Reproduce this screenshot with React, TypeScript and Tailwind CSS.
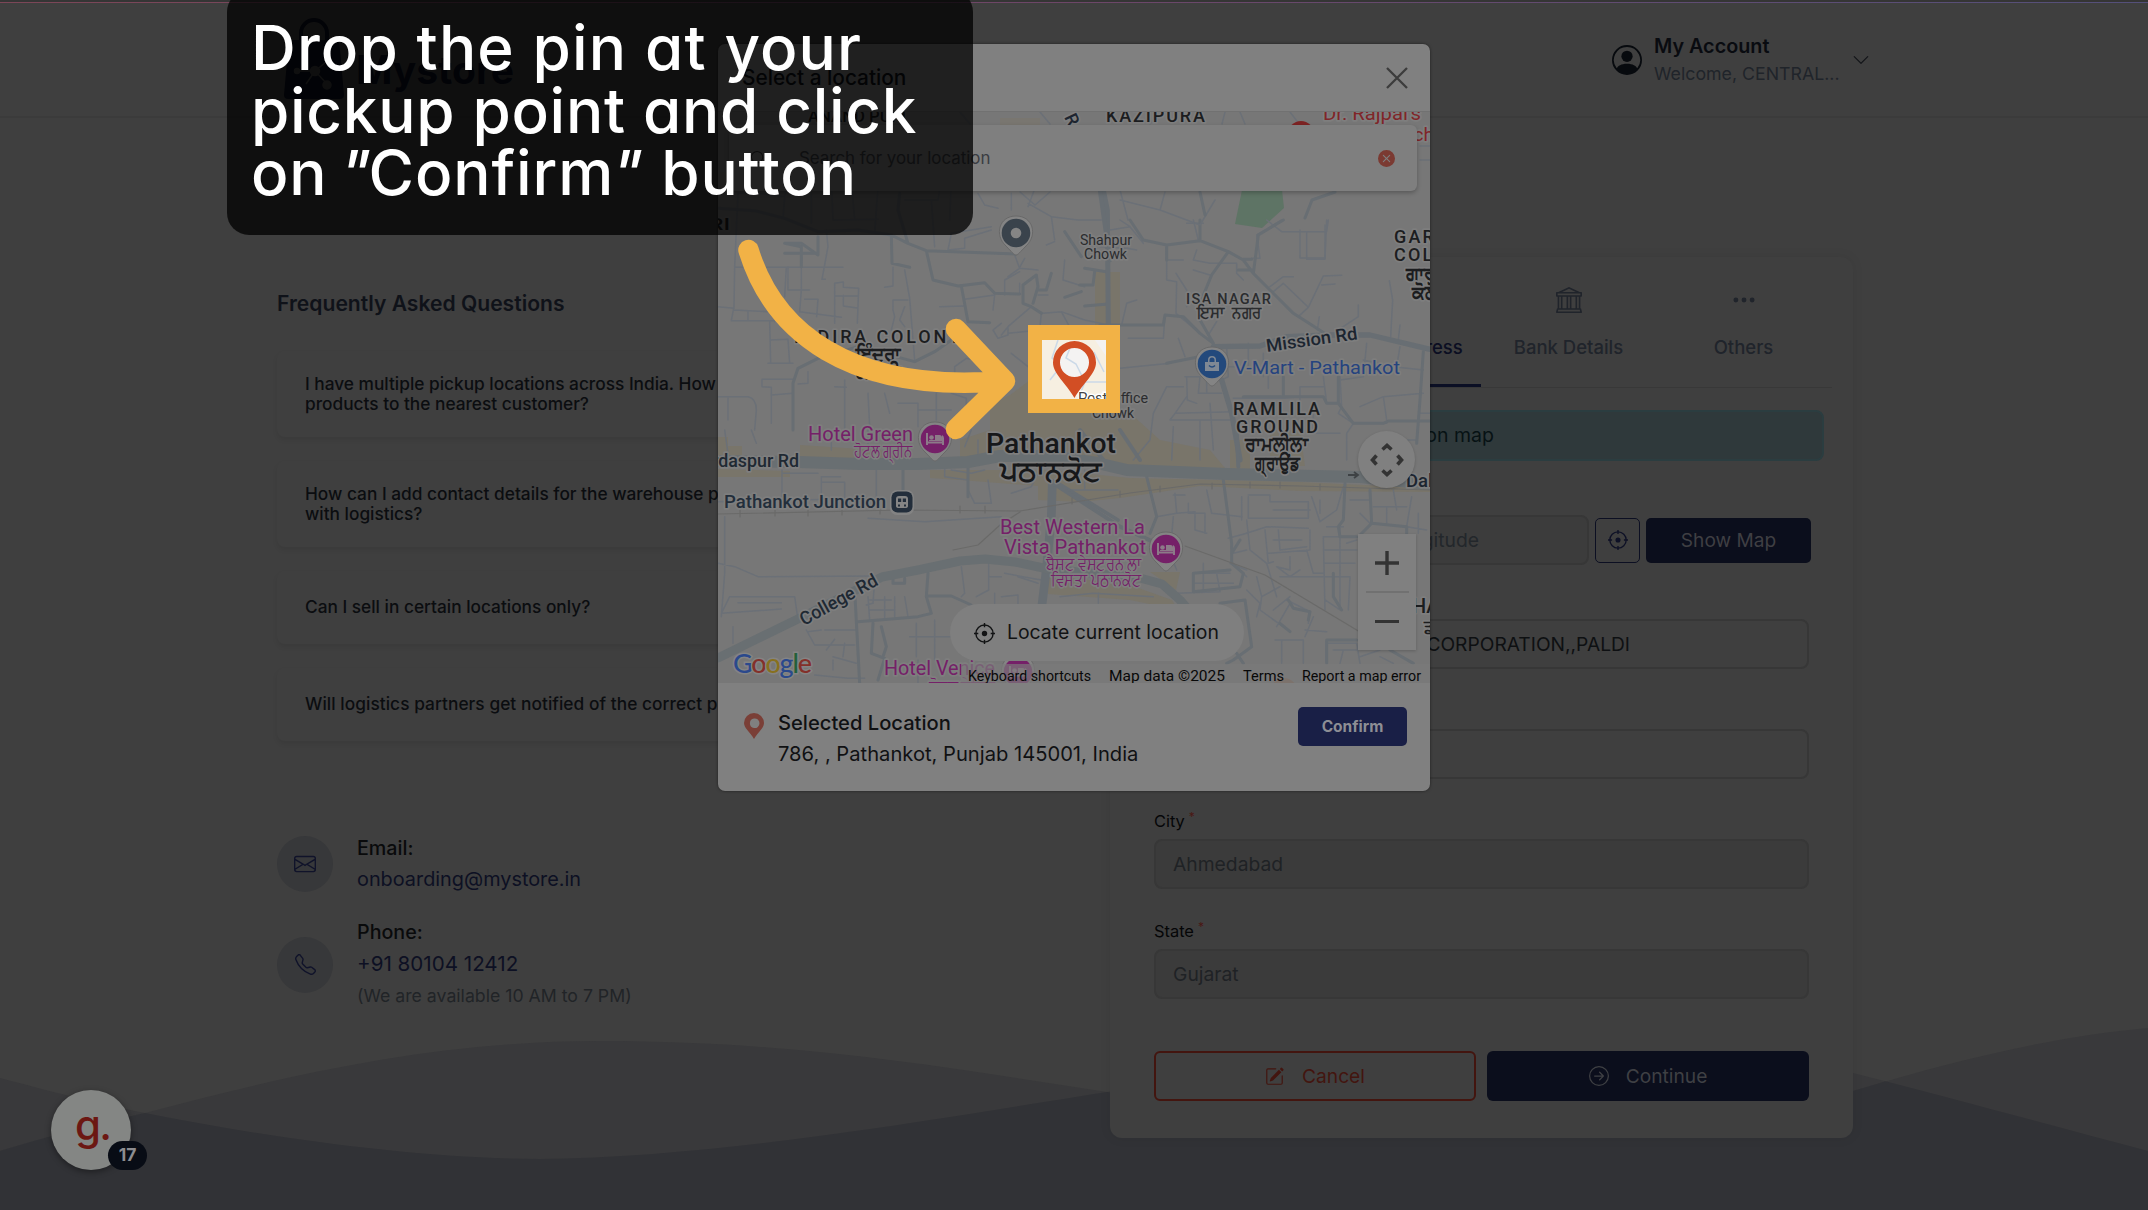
import type { ReactNode } from "react";
import {
  BsArrowRightCircle,
  BsBank,
  BsChevronDown,
  BsEnvelope,
  BsPencilSquare,
  BsPersonCircle,
  BsSearch,
  BsTelephone,
  BsThreeDots,
  BsXCircleFill,
} from "react-icons/bs";

function LocateIcon({ className }: { className: string }) {
  return (
    <svg viewBox="0 0 22 22" className={className} fill="none" stroke="currentColor" strokeWidth="1.5">
      <circle cx="11" cy="11" r="9" />
      <circle cx="11" cy="11" r="2.8" fill="currentColor" stroke="none" />
      <path d="M11 0v4.5M11 17.5V22M0 11h4.5M17.5 11H22" />
    </svg>
  );
}

function Logo() {
  return (
    <svg viewBox="0 0 60 84" className="h-[84px] w-[60px]">
      <path d="M17 30V17a13 13 0 0 1 26 0v13" fill="none" stroke="#0a0d1c" strokeWidth="4" />
      <path d="M8 24H52Q55 24 55.500 28L60 79Q60 83 56 83H4Q0 83 0 79L4.500 28Q5 24 8 24Z" fill="#0a0d1c" />
      <g stroke="#3f3f3f" strokeWidth="1.500" fill="#3f3f3f">
        <path d="M13 55H31L43 68M31 55L42 46M31 55L22 68" fill="none" />
        <circle cx="31" cy="55" r="4.500" />
        <circle cx="43" cy="69" r="4" />
        <circle cx="13" cy="55" r="2.500" />
      </g>
    </svg>
  );
}

function Header() {
  return (
    <header className="flex h-[118px] shrink-0 items-center justify-between border-b-2 border-[#3b3b3b] pr-[278px] pl-[284px]">
      <div className="flex items-center gap-3 text-[#0a0d1c]">
        <Logo />
        <span className="pt-[22px] text-[39px] leading-none font-bold">Mystore</span>
      </div>
      <div className="flex items-center pt-[3px]">
        <BsPersonCircle className="size-[30px] text-[#070a0e]" />
        <div className="ml-3 w-[186px] whitespace-nowrap">
          <div className="text-[19.8px] leading-[27px] font-semibold text-[#090b10]">My Account</div>
          <div className="text-[17.75px] leading-[27px] text-[#20242a]">Welcome, CENTRAL...</div>
        </div>
        <BsChevronDown className="ml-[12px] size-[18px] text-[#121418]" />
      </div>
    </header>
  );
}

function FaqCard({ children, tall }: { children: ReactNode; tall?: boolean }) {
  return (
    <div
      className={
        "flex w-[700px] items-center overflow-hidden rounded-lg pl-[28px] text-[17.3px] leading-[20.5px] font-medium whitespace-nowrap text-[#0b0d10] shadow-[0_3px_5px_rgba(0,0,0,0.08)] " +
        (tall ? "h-[86px]" : "h-[73px]")
      }
    >
      <p>{children}</p>
    </div>
  );
}

function LeftColumn() {
  return (
    <section className="w-[760px] pt-[170px]">
      <h2 className="text-[21.1px] leading-[32px] font-semibold text-[#0f1219]">Frequently Asked Questions</h2>
      <div className="mt-[31px] flex flex-col gap-6">
        <FaqCard tall>
          I have multiple pickup locations across India. How can I map the
          <br />
          products to the nearest customer?
        </FaqCard>
        <FaqCard tall>
          How can I add contact details for the warehouse person to share
          <br />
          with logistics?
        </FaqCard>
        <FaqCard>Can I sell in certain locations only?</FaqCard>
        <FaqCard>
          <span className="tracking-[0.06px]">Will logistics partners get notified of the correct pickup location?</span>
        </FaqCard>
      </div>
      <div className="mt-[92px] flex items-center gap-6">
        <div className="flex size-[56px] items-center justify-center rounded-full bg-[#37383a]">
          <BsEnvelope className="size-[22px] text-[#10132a]" />
        </div>
        <div className="leading-[31px]">
          <div className="text-[19.7px] font-medium text-[#090a0b]">Email:</div>
          <div className="text-[19.85px] text-[#0d1023]">onboarding@mystore.in</div>
        </div>
      </div>
      <div className="mt-[22px] flex items-center gap-6">
        <div className="flex size-[56px] items-center justify-center rounded-full bg-[#37383a]">
          <BsTelephone className="size-[21px] text-[#10132a]" />
        </div>
        <div className="leading-[31px]">
          <div className="text-[19.7px] font-medium text-[#090a0b]">Phone:</div>
          <div className="text-[20.6px] leading-[31px] text-[#0d1023]">+91 80104 12412</div>
          <div className="text-[17.7px] leading-[33px] text-[#212427]">(We are available 10 AM to 7 PM)</div>
        </div>
      </div>
    </section>
  );
}

function Tab({ icon, label, active }: { icon: ReactNode; label: string; active?: boolean }) {
  return (
    <div
      className={
        "flex h-[130px] w-[175px] flex-col items-center border-b-[3px] pt-[30px] text-[18.5px] font-medium " +
        (active ? "border-[#0b0f24] text-[#0b0e22]" : "border-transparent text-[#20242b]")
      }
    >
      <div className="flex h-[26px] items-center">{icon}</div>
      <div className="mt-[20px] leading-[28px] whitespace-nowrap">{label}</div>
    </div>
  );
}

function Field({ label, value }: { label: string; value: string }) {
  return (
    <div>
      <div className="flex h-[35px] gap-1 text-[16.4px] leading-[35px] text-[#050607]">
        {label}
        <span className="-mt-[5px] text-[12px] text-[#4a1713]">*</span>
      </div>
      <div className="flex h-[50px] items-center rounded-lg border-2 border-[#373737] bg-[#3b3b3b] pl-[17px] text-[19.3px] text-[#1f2225]">
        {value}
      </div>
    </div>
  );
}

function FormCard() {
  return (
    <section className="mt-[139px] h-[881px] w-[743px] rounded-xl bg-[#3f3f3f] px-[21px] shadow-[0_0_12px_rgba(0,0,0,0.08)]">
      <div className="flex border-b border-[#383838]">
        <Tab icon={<BsPersonCircle className="size-6" />} label="Business Details" />
        <Tab icon={<BsPencilSquare className="size-6" />} label="Pickup Address" active />
        <Tab icon={<BsBank className="size-[26px]" />} label="Bank Details" />
        <Tab icon={<BsThreeDots className="size-[26px]" />} label="Others" />
      </div>
      <div className="mt-[22px] mr-[8px] ml-[11px] flex h-[51px] items-center rounded-lg border-2 border-[#2b3d40] bg-[#2f393b]">
        <span className="w-[350px] text-right text-[19.5px] text-[#071214]">Locate your address on map</span>
      </div>
      <div className="mr-[23px] ml-[23px]">
        <div className="mt-[54px] -mr-[2px] flex items-center">
          <div className="flex h-[50px] flex-1 items-center rounded-lg border-2 border-[#373737] bg-[#3c3c3c] text-[19.3px] text-[#23272b]">
            <span className="w-[323px] text-right">Longitude</span>
          </div>
          <div className="ml-[6px] flex h-[45px] w-[45px] items-center justify-center rounded-[5px] border-[1.500px] border-[#0c0f22] text-[#0e1126]">
            <LocateIcon className="size-[20px]" />
          </div>
          <div className="ml-[6px] flex h-[45px] w-[165px] items-center justify-center rounded-[5px] bg-[#0b0e1c] text-[19.1px] text-[#3f3f43]">
            Show Map
          </div>
        </div>
        <div className="mt-[54px] flex h-[50px] items-center rounded-lg border-2 border-[#373737] text-[19.2px] text-[#0e1012]">
          <span className="w-[474px] text-right whitespace-nowrap">GUJARAT CORPORATION,,PALDI</span>
        </div>
        <div className="mt-[60px] h-[50px] rounded-lg border-2 border-[#373737]" />
        <div className="mt-[25px]">
          <Field label="City" value="Ahmedabad" />
        </div>
        <div className="mt-[25px]">
          <Field label="State" value="Gujarat" />
        </div>
        <div className="mt-[52px] grid grid-cols-2 gap-[11px] text-[19.2px]">
          <div className="flex h-[50px] items-center justify-center gap-[18px] rounded-md border-2 border-[#43150f] text-[#43150f]">
            <BsPencilSquare className="size-[19px]" />
            Cancel
          </div>
          <div className="flex h-[50px] items-center justify-center gap-[17px] rounded-md bg-[#0b0e1c] text-[#3f4044]">
            <BsArrowRightCircle className="size-[20px]" />
            Continue
          </div>
        </div>
      </div>
    </section>
  );
}

const WAVE_A =
  "M0 1078C50 1091 90 1102 145 1113C270 1138 420 1159 540 1159C720 1157 930 1120 1107 1092C1300 1060 1420 1030 1550 1030C1680 1030 1760 1051 1853 1073C1960 1100 2060 1128 2148 1151V1210H0Z";
const WAVE_B =
  "M0 1151C50 1136 95 1124 145 1113C300 1072 440 1041 600 1041C800 1041 950 1068 1107 1092C1250 1115 1380 1130 1500 1130C1650 1130 1760 1118 1853 1091C1970 1056 2060 1036 2148 1028V1210H0Z";

function Waves() {
  return (
    <svg viewBox="0 0 2148 1210" className="absolute inset-0 size-full">
      <clipPath id="wave-a">
        <path d={WAVE_A} />
      </clipPath>
      <path d={WAVE_A} fill="#39393b" />
      <path d={WAVE_B} fill="#39393b" />
      <path d={WAVE_B} fill="#313236" clipPath="url(#wave-a)" />
    </svg>
  );
}

type LabelProps = {
  x: number;
  y: number;
  w?: number;
  size: number;
  fill?: string;
  weight?: number;
  rotate?: number;
  spacing?: number;
  halo?: boolean;
  children: string;
};

function Label({ x, y, w, size, fill = "#1c1d1f", weight = 400, rotate, spacing, halo = true, children }: LabelProps) {
  return (
    <text
      x={x}
      y={y}
      textLength={w}
      lengthAdjust={w && spacing ? "spacing" : "spacingAndGlyphs"}
      fontSize={size}
      fontWeight={weight}
      letterSpacing={spacing}
      fill={fill}
      stroke={halo ? "#7e7e7e" : "none"}
      strokeWidth={3.5}
      strokeLinejoin="round"
      paintOrder="stroke"
      transform={rotate ? `rotate(${rotate} ${x} ${y})` : undefined}
      className="whitespace-pre"
    >
      {children}
    </text>
  );
}

function PlacePin({ x, y, fill, children }: { x: number; y: number; fill: string; children: ReactNode }) {
  return (
    <g transform={`translate(${x} ${y})`}>
      <path
        d="M0 22C-2 22 -4 19 -10 13C-22 2 -17 -17 0 -17C17 -17 22 2 10 13C4 19 2 22 0 22Z"
        fill="#848484"
        stroke="#696969"
        strokeWidth="1"
      />
      <circle r="14.300" fill={fill} />
      {children}
    </g>
  );
}

function BedGlyph() {
  return (
    <g fill="#8c7a88">
      <path d="M-9 -6H-7V2.500H7V-1.500Q7 -4 4.500 -4H0V1H-6V3H9V6H7V4.500H-7V6H-9ZM7 -4Q9 -3 9 -1V5H7Z" />
      <circle cx="-3.500" cy="-1.500" r="2.300" />
    </g>
  );
}

function Streets() {
  return (
    <g fill="none" strokeLinejoin="round" strokeLinecap="round">
      <g stroke="#6b7077" strokeWidth="4.500" transform="translate(718 180) scale(.33333)">
        <path d="M60 40L50 260L48 380L40 422H170M48 390L170 396V425M90 392V422M50 262H375M0 380L48 385M170 396L250 420M210 260V330H275M205 262L200 350M250 250V330L245 395L370 412M260 358H300L296 410M325 150L330 200L312 298H322M350 310V430M350 310L376 306V322L422 325L418 430M352 348H420M376 346V378L418 384" />
        <path d="M155 425L158 550M158 480L210 478L215 550M150 550H225M132 598H225M132 598V620L160 622V730M225 640L160 645M270 575V610L240 612M380 600V750M350 620L385 622M0 650L90 650Q115 655 115 690L110 750M30 655V720M560 270L575 355L590 540M525 360H570M525 360V390L530 410L520 450M500 322L525 318V262M560 380L545 420L560 440" />
        <path d="M780 40L800 75L840 85M880 40V90M930 80L960 0M1000 110L1080 120H1150M930 70L1000 110L1010 180M820 140L700 160L690 210M740 175L820 150M740 175V205L690 210M890 225L905 265L870 290M905 265L960 270M920 235L905 262M1040 240L1035 300L1100 320M830 345L825 390M740 358L830 345M665 380L740 378M860 345V300L905 275M850 465L870 440L940 380L975 400L1030 395L1060 450M870 440V465L840 475L825 450L850 430M970 400L965 450L870 460M1030 395L1100 420L1172 435M905 340V310M990 345H960M985 195L1010 185" />
        <path d="M700 640L745 655V750M655 640V720M500 640L515 700M540 670H600V740M450 640L455 740M600 690H700M710 560L745 535L860 560M710 560V600M880 520L930 560L1000 580M60 40H120V0M120 40L200 50L210 0M200 50L195 115M280 40V130M340 0L345 120L480 118M400 0L410 120M480 20L470 160M560 60H660L670 0M640 60L650 200M700 0L695 120" />
      </g>
      <g stroke="#686e73" strokeWidth="9" transform="translate(718 180) scale(.33333)">
        <path d="M0 85L110 92L200 115L300 155L420 150L520 165L570 190L625 212L895 222M520 165L522 250L575 262M625 212L645 300L720 318L800 308L830 340L905 342M730 318L750 425L815 428M545 40L540 90L570 190M200 190L250 200V260M250 190L300 225V170M200 190H250M200 220H300" />
        <path d="M225 750L225 610L240 565L300 535L420 500L590 545L650 515L700 480M915 315L955 285L960 320L945 370M915 315V370L940 380L970 400M1000 280L985 330L960 330M1040 352L1090 335M1100 265L1165 275M1100 378L1170 372M1040 155L1090 230M1085 315L1125 315L1130 275" />
        <path d="M1150 0L1168 90L1172 560" strokeWidth="15" />
      </g>
      <g stroke="#6b7077" strokeWidth="4.500" transform="translate(1100 220) scale(.33333)">
        <path d="M200 75V180L230 185L228 280L300 340M200 120H250M228 160L260 210V260M330 130H410V160L430 180M290 90L280 120L330 130M280 150L330 165M455 115H480L470 45L545 0M545 35H680L685 0M620 35V118H675L680 0M500 0L545 35M510 200L550 170H580M520 215L550 190L625 262M625 262L595 290M625 262L670 168L725 166M665 195L705 192M658 290L652 330M775 255V290L715 330M868 182L878 240L872 350M900 315L895 360M750 340V330M65 315L80 250L110 240M85 355H190L195 285M235 355L255 410M350 305L325 345" />
        <path d="M380 380L385 470L365 480M385 440H505V505M445 370V440M490 400V470M255 470H300L295 520H320V470M260 470L262 540L290 550M320 520H365M160 580L200 500H250M0 470L60 445L210 430M160 580L150 660L100 720M210 600L225 580L260 530M210 600H400M225 580L400 575M220 620L215 720M300 600V720M330 550L340 690M400 535H550L600 530H670M550 470V525M670 470L680 550H720M670 500H600V560M720 470L725 560L715 580L760 610H860M760 610L740 640V720M640 560V640H720M850 530L860 600M970 395L960 540L950 660H900M880 440L970 450M900 380L890 440M800 370L790 470L720 480M790 420L880 440M960 580H990M780 560L850 530L970 520" />
        <path d="M30 30L90 20L130 70M0 80L80 85L110 90M60 0L90 20M280 0L295 60M260 10H310" />
      </g>
      <g stroke="#686e73" strokeWidth="9" transform="translate(1100 220) scale(.33333)">
        <path d="M90 0L130 60L200 75L300 62L385 95L430 120L460 160L580 280L690 350M460 160L475 45L550 0M385 95L335 165L300 250V300L340 370M300 62V0M200 75V120M430 118H455M415 150H455M0 315H190L195 285L250 290L300 340L340 370M200 430L350 400M550 470V525M430 530H670L680 550H715L760 610H850L865 603H990M715 470V550M970 395L960 540L950 670" />
        <path d="M340 380L480 378L560 350L690 345L810 345L990 388M365 480L395 580L420 720" strokeWidth="16" />
      </g>
      <g stroke="#6b7077" strokeWidth="4.500" transform="translate(718 430) scale(.33333)">
        <path d="M192 120V215M0 215L480 205M192 130H300M310 200V140H368M310 157H380V210M475 120V205M0 400L50 410L120 440L480 438M10 560L20 430V260M35 500H230L240 570M35 500L10 550L190 537M60 518H190M45 590V640M265 600L290 645H410M270 605L310 600M320 600H415M350 628L325 660M345 680L415 700M345 690V720M450 265L620 275L850 260M730 410L740 490L730 500M812 400V480L775 500M812 440H850M450 500L455 570M455 510H520M500 500V570M530 500V560M560 500L570 560M455 540H530M595 580V680M650 570V690M575 620H700M290 735L390 745H440M600 690V760M375 680L380 640M850 500L900 495V540M470 450L465 520L445 525" />
        <path d="M680 100V140L750 150M810 150L820 220H770L750 180M880 190L940 170L960 130M100 0L115 40M20 0L30 70M340 0V60M450 0V60M760 0L740 50M540 0V50M780 30V70M1060 180H1200M1100 120V180M830 490V520M900 440L960 460M860 430L970 450M700 120L760 130L800 120" />
      </g>
      <g stroke="#686e73" strokeWidth="9" transform="translate(718 430) scale(.33333)">
        <path d="M555 115V180M750 110V200M630 430L625 500L640 550L600 560L420 575M625 498H700L760 525M410 480L425 760M465 580L460 670L500 685L480 750M490 590L505 650L495 680M525 445V460H560V445" />
        <path d="M1003 160L1000 260L985 420L970 540" strokeWidth="26" />
        <path d="M1020 160L1200 270" strokeWidth="11" />
      </g>
      <g stroke="#6b7077" strokeWidth="4.500" transform="translate(1060 430) scale(.33333)">
        <path d="M345 190L350 250L405 245V300L440 310M340 195H375M385 220V250H435V310M340 260L330 370L350 420M545 200V270M565 200V265H745V215H630V195H565M640 240H750M755 200L780 275L830 240L850 170M780 210V250M560 270L570 360L620 400L650 500M560 310L620 290L745 295M615 300L625 400L640 395M640 330H725M655 300L660 360L740 350M625 370L750 360V300M690 380V420L650 410L690 440L720 420M660 440H790M740 360L760 430H790M790 320L795 540M790 320H850M790 360H890M800 290H850M860 340L890 330M795 400H885M840 290V540L795 510M795 440H870L865 540" />
        <path d="M505 325L560 310M520 370L560 360M510 400L560 420M590 440L605 500L600 540L690 605M605 500L660 470M640 540L690 500M560 480L600 520L590 560M650 590L690 520M645 630H730V700M665 630V700M735 600L800 605M760 560L735 620M680 510L750 545L745 580M800 700V640H890L900 700M820 660H890M840 700L850 660M900 680L960 660M960 680L1000 700M400 430H510M405 460H520M430 400V480M470 430L480 485M520 400L560 440M350 490L480 485M0 500L100 490L280 500M115 490V520M350 250L290 260M440 180L455 250L545 260M870 210H930V180M900 250L930 280M980 230V280M1055 200L1040 290L1100 300M940 230H1040M1075 250V310M1000 180L1010 240" />
      </g>
      <g stroke="#686e73" strokeWidth="9" transform="translate(1060 430) scale(.33333)">
        <path d="M260 140L290 260L270 310M490 150L515 340V400L550 430L540 470L400 485V430L510 420M540 330L515 370M855 160L850 270L835 290L840 320M930 180L935 280L1040 290V310M840 320H890M900 315L935 280M685 510L700 535L750 545L745 570M660 580L690 605M480 520L555 510L575 650L520 690L500 700M820 430V500L845 540M800 630H890M800 630V700M530 670L550 700M990 660L1060 700" />
        <path d="M-20 160L180 290L290 340M180 0L240 90M60 0L130 90M530 0L535 110" strokeWidth="12" />
      </g>
      <g stroke="#6b7077" strokeWidth="1.500">
        <path d="M1120 190L1128 220M1165 192L1160 210L1200 225L1215 200M1240 112L1245 124M1290 112L1300 125M900 112L905 124M960 112L970 124M1040 112L1050 124M1160 112L1150 124M1225 112L1222 124M1380 112V124M1120 200L1160 210M1020 192L1035 205L1050 192M1420 146H1430M1420 160H1430M1300 230V258H1325V225" />
        <path d="M1100 190L1110 260" strokeWidth="4.500" stroke="#686e73" />
        <path d="M1335 192L1312 200L1305 218M1200 192L1205 215" strokeWidth="3" stroke="#686e73" />
      </g>
      <g stroke="#696f72">
        <path
          d="M718 461L798 462L861 464L918 464L968 462L1000 456L1050 456L1097 463L1127 470L1177 472L1227 474L1360 477L1430 484"
          strokeWidth="12"
        />
        <path
          d="M718 658L800 618L882 577L918 570L960 561L985 559L1015 562L1048 569L1140 578L1162 584L1180 600L1192 614"
          strokeWidth="9"
        />
      </g>
      <g stroke="#6a6a69" strokeWidth="1.200">
        <path d="M718 514L900 510L1020 511L1130 493L1200 484L1300 486L1430 490" />
        <path d="M740 510v7M775 509v7M808 509v7M842 508v7M880 507v7M960 506v7M985 506v7M1072 498v6M1120 491v6M1160 486v6M1212 483v6M1250 482v6M1280 482v6M1320 484v6" />
        <path d="M1185 546L1265 575L1360 632M953 550L978 545L1000 525L1020 512" />
      </g>
    </g>
  );
}

function MapCanvas() {
  return (
    <svg viewBox="718 112 712 571" className="block h-[571px] w-[712px] font-[Roboto,'Noto_Sans',sans-serif]">
      <rect x="718" y="112" width="712" height="571" fill="#777777" />
      <g fill="#79756a">
        <path d="M1095 272H1120V345H1095Z" />
        <path d="M718 437H728V446H742V457H718ZM718 469L790 471V477H718ZM800 445L905 452V458H800ZM1010 395L1030 380L1130 413L1160 440L1210 450L1225 468L1120 465L1060 450L960 458L960 440L990 430V405Z" />
        <path d="M930 470H1050L1130 478L1300 482L1430 488V492L1300 491L1200 486L1120 498L1080 502L1038 500V486L960 480L930 478ZM1270 430H1300L1305 466H1270ZM1230 440H1250V470H1230Z" />
        <path d="M1048 575L1130 585L1172 600L1178 610L1130 600L1048 594ZM1150 572L1180 572L1176 590Z" />
      </g>
      <path d="M1242 190H1282L1284 208L1262 228L1235 224Z" fill="#5e7465" />
      <path d="M720 172H770L765 190H720ZM1000 118H1040V125H1000Z" fill="#797670" />
      <Streets />

      <Label x={1106} y={122} w={101} size={18} weight={500} spacing={2}>KAZIPURA</Label>
      <Label x={808} y={122} w={98} size={17} weight={500}>ANAND PURI</Label>
      <Label x={1064} y={117} size={18} weight={500} rotate={65} fill="#1d2530">R</Label>
      <circle cx="1301" cy="134" r="13" fill="#7d2323" />
      <Label x={1323} y={120} w={98} size={19} fill="#802528">Dr. Rajpal's</Label>
      <Label x={1397} y={141} size={19} fill="#802528">arch</Label>
      <Label x={694} y={230} w={36} size={17} weight={500}>KRI</Label>
      <Label x={1080} y={245} w={52} size={15} fill="#2b2c2e">Shahpur</Label>
      <Label x={1084} y={259} w={43} size={15} fill="#2b2c2e">Chowk</Label>
      <Label x={1394} y={243} size={18} weight={500} spacing={2.2}>GARDEN</Label>
      <Label x={1394} y={261} size={18} weight={500} spacing={2.2}>COLONY</Label>
      <Label x={1406} y={280} size={19} weight={700}>ਗਾਰਡਨ</Label>
      <Label x={1412} y={299} size={19} weight={700}>ਕੋਲੋਨੀ</Label>
      <Label x={1186} y={304} w={86} size={14.5} weight={500} fill="#2b2c2e" spacing={1}>ISA NAGAR</Label>
      <Label x={1197} y={318} w={64} size={16} weight={600} fill="#2b2c2e">ਇਸਾ  ਨਗਰ</Label>
      <Label x={794} y={343} w={168} size={18} weight={500} spacing={2}>INDIRA COLONY</Label>
      <Label x={856} y={361} w={45} size={19.5} weight={700}>ਇੰਦਰਾ</Label>
      <Label x={856} y={379} w={45} size={19.5} weight={700}>ਕਲੋਨੀ</Label>
      <Label x={1267} y={352} w={92} size={18} weight={500} fill="#1c2530" rotate={-8}>Mission Rd</Label>
      <Label x={1234} y={374} w={166} size={19} fill="#25437f">V-Mart - Pathankot</Label>
      <Label x={1233} y={415} w={89} size={18} weight={500} spacing={2}>RAMLILA</Label>
      <Label x={1236} y={433} w={84} size={18} weight={500} spacing={2}>GROUND</Label>
      <Label x={1245} y={451} w={63} size={19.5} weight={700}>ਰਾਮਲੀਲਾ</Label>
      <Label x={1255} y={470} w={45} size={19.5} weight={700}>ਗ੍ਰਾਉਂਡ</Label>
      <Label x={1078} y={403} w={70} size={15} fill="#2b2c2e">Post Office</Label>
      <Label x={1092} y={418} w={42} size={15} fill="#2b2c2e">Chowk</Label>
      <Label x={808} y={441} w={105} size={19.5} fill="#752068">Hotel Green</Label>
      <Label x={854} y={457} w={58} size={18} weight={500} fill="#752068">ਹੋਟਲ ਗ੍ਰੀਨ</Label>
      <Label x={986} y={453} w={130} size={27.5} weight={500} fill="#17181a">Pathankot</Label>
      <Label x={1000} y={481} w={101} size={28} weight={800} fill="#17181a">ਪਠਾਨਕੋਟ</Label>
      <Label x={690} y={467} w={109} size={18.5} weight={500} fill="#1f2933">Gurdaspur Rd</Label>
      <Label x={724} y={508} w={162} size={18.5} weight={500} fill="#232e3b">Pathankot Junction</Label>
      <Label x={1406} y={487} size={18.5} weight={500} fill="#1c2530">Dalhousie Rd</Label>
      <Label x={1000} y={534} w={145} size={19.5} fill="#752068">Best Western La</Label>
      <Label x={1004} y={554} w={142} size={19.5} fill="#752068">Vista Pathankot</Label>
      <Label x={1046} y={570} w={95} size={17.5} weight={500} fill="#752068">ਬੈਸਟ ਵੇਸਟਰਨ ਲਾ</Label>
      <Label x={1051} y={586} w={90} size={17.5} weight={500} fill="#752068">ਵਿਸਤਾ ਪਠਾਨਕੋਟ</Label>
      <Label x={804} y={626} w={86} size={18.5} weight={500} fill="#1f2933" rotate={-29}>College Rd</Label>
      <Label x={884} y={675} w={111} size={19.5} fill="#752068">Hotel Venice</Label>
      <Label x={929} y={692} w={66} size={17} weight={500} fill="#752068">ਹੋਟਲ ਵੇਨਿਸ</Label>
      <Label x={1412} y={613} size={20} weight={500}>HA</Label>
      <Label x={1424} y={633} size={18} weight={700}>ਡਾ</Label>

      <PlacePin x={1016} y={233} fill="#3a434c">
        <circle r="5.300" fill="#858585" />
      </PlacePin>
      <PlacePin x={1212} y={364} fill="#23497c">
        <path d="M-7 -2H7L7 7H-7ZM-4 -2V-4A4 4 0 0 1 4 -4V-2" fill="#7f8894" />
        <path d="M-2.500 -2V-4A2.500 2.500 0 0 1 2.500 -4V-2Z" fill="#23497c" />
        <path d="M-3 1.500Q0 4.500 3 1.500" fill="none" stroke="#23497c" strokeWidth="1.500" />
      </PlacePin>
      <PlacePin x={935} y={439} fill="#752068">
        <BedGlyph />
      </PlacePin>
      <PlacePin x={1166} y={549} fill="#752068">
        <BedGlyph />
      </PlacePin>
      <PlacePin x={1018} y={672} fill="#752068">
        <BedGlyph />
      </PlacePin>
      <g transform="translate(902 502)">
        <rect x="-12" y="-12" width="24" height="25" rx="7" fill="#838383" />
        <rect x="-10.500" y="-10.500" width="21" height="21" rx="6" fill="#232e3b" />
        <path d="M-6 4V-3Q-6 -6 -3 -6H3Q6 -6 6 -3V4Q6 6 3 6H-3Q-6 6 -6 4Z" fill="#858585" />
        <path d="M-4 -3.500H-.8V0H-4ZM.8 -3.500H4V0H.8ZM-4 2.500h2v2h-2ZM2 2.500h2v2h-2Z" fill="#232e3b" />
      </g>
      <path d="M1348 475H1357M1354 472L1358 475L1354 478" stroke="#3e4245" strokeWidth="1.800" fill="none" />
      <circle cx="1284" cy="691" r="13" fill="#80604c" />

      <rect x="961" y="664" width="469" height="19" fill="#7a7a7a" opacity=".7" />
      <Label x={968} y={681} w={123} size={14.2} fill="#080808" halo={false}>Keyboard shortcuts</Label>
      <Label x={1109} y={681} w={116} size={14.2} fill="#080808" halo={false}>Map data ©2025</Label>
      <Label x={1243} y={681} w={41} size={14.2} fill="#080808" halo={false}>Terms</Label>
      <Label x={1302} y={681} w={119} size={14.2} fill="#080808" halo={false}>Report a map error</Label>
      <text
        x="733"
        y="673"
        textLength="79"
        fontSize="27"
        stroke="#848484"
        strokeWidth="3"
        paintOrder="stroke"
        fontWeight="500"
        className="font-[Lato]"
      >
        <tspan fill="#2b498c">G</tspan>
        <tspan fill="#83302a">o</tspan>
        <tspan fill="#87701f">o</tspan>
        <tspan fill="#2b498c">g</tspan>
        <tspan fill="#23603a">l</tspan>
        <tspan fill="#83302a">e</tspan>
      </text>
    </svg>
  );
}

function MapControls() {
  return (
    <>
      <div className="absolute top-[13px] left-[11px] flex h-[66px] w-[688px] items-center rounded-md bg-[#7f7f7f] pt-[1px] pr-[22px] pl-[22px] shadow-[0_2px_4px_rgba(0,0,0,0.25)]">
        <BsSearch className="size-[15px] text-[#333]" />
        <span className="mt-px ml-[33px] flex-1 text-[16.9px] text-[#3a3c42]">Search for your location</span>
        <BsXCircleFill className="size-[17px] text-[#7b3a32]" />
      </div>
      <div className="absolute top-[319px] right-[15px] flex size-[57px] items-center justify-center rounded-full bg-[#808080] shadow-[0_1px_3px_rgba(0,0,0,0.2)]">
        <svg viewBox="0 0 34 34" className="size-[34px]" fill="none" stroke="#333" strokeWidth="3.600">
          <path d="M12.500 6.500L17 2.500L21.500 6.500M12.500 27.500L17 31.500L21.500 27.500M6.500 12.500L2.500 17L6.500 21.500M27.500 12.500L31.500 17L27.500 21.500" />
        </svg>
      </div>
      <div className="absolute top-[422px] right-[14px] flex h-[116px] w-[58px] flex-col items-center bg-[#808080] shadow-[0_1px_3px_rgba(0,0,0,0.2)]">
        <div className="flex h-[59px] w-[43px] items-center justify-center border-b-2 border-[#717171]">
          <svg viewBox="0 0 24 24" className="size-6" stroke="#333" strokeWidth="3.400">
            <path d="M0 12H24M12 0V24" />
          </svg>
        </div>
        <div className="flex h-[57px] items-center">
          <div className="h-[3px] w-6 bg-[#333]" />
        </div>
      </div>
      <div className="absolute top-[492px] left-[232px] flex h-[57px] w-[294px] items-center rounded-full bg-[#7f7f7f] pt-px pl-[24px] text-[19.4px] text-[#121314]">
        <LocateIcon className="size-[21px]" />
        <span className="ml-[12px] whitespace-nowrap">Locate current location</span>
      </div>
    </>
  );
}

function LocationModal() {
  return (
    <div className="absolute top-[44px] left-[718px] flex h-[747px] w-[712px] flex-col overflow-hidden rounded-[7px] bg-[#808080] shadow-[0_0_3px_rgba(0,0,0,0.5)]">
      <div className="flex h-[68px] shrink-0 items-center justify-between border-b border-[#717171] pr-[22px] pl-[24px]">
        <h3 className="text-[20.8px] font-medium text-[#0e1017]">Select a location</h3>
        <svg viewBox="0 0 22 22" className="size-[22px]" stroke="#3c3c3c" strokeWidth="2.300">
          <path d="M1 1L21 21M21 1L1 21" />
        </svg>
      </div>
      <div className="relative h-[571px] shrink-0">
        <MapCanvas />
        <MapControls />
      </div>
      <div className="flex flex-1 items-start pt-[24px] pr-[23px] pl-[26px]">
        <svg viewBox="0 0 20 26" className="mt-[6px] h-[26px] w-5">
          <path
            d="M10 0A10 10 0 0 0 0 10C0 15 6 19 10 26C14 19 20 15 20 10A10 10 0 0 0 10 0ZM10 5.500A4.800 4.800 0 1 1 10 15A4.800 4.800 0 0 1 10 5.500Z"
            fill="#7a3f37"
            fillRule="evenodd"
          />
        </svg>
        <div className="ml-[14px] flex-1 text-[20.17px] leading-[31px] text-[#101113]">
          <div className="font-medium">Selected Location</div>
          <div>786, , Pathankot, Punjab 145001, India</div>
        </div>
        <div className="flex h-[39px] w-[109px] items-center justify-center rounded-[5px] bg-[#191f46] text-[15.5px] font-bold text-[#8d8e94]">
          Confirm
        </div>
      </div>
    </div>
  );
}

function PinHighlight() {
  return (
    <div className="absolute top-[325px] left-[1028px] h-[88px] w-[92px] bg-[#f2b246] px-[14px] pt-[15px]">
      <svg viewBox="1042 340 64 59" className="block h-[59px] w-[64px] font-[Roboto,sans-serif]">
        <rect x="1042" y="340" width="64" height="59" fill="#f6efe1" />
        <path d="M1082 340H1095L1106 356V340Z" fill="#f3f2f3" />
        <path d="M1058 340L1052 358L1061 366L1050 380M1078 399L1085 382H1106M1094 352L1104 372" stroke="#cbd9e8" strokeWidth="1.500" fill="none" />
        <text x="1078" y="403" fontSize="15" textLength="70" fill="#444" stroke="#fff" strokeWidth="3" paintOrder="stroke">
          Post Office
        </text>
        <circle cx="1074.500" cy="362.500" r="15" fill="#f4f3f2" />
        <path d="M1070 348L1066 358L1076 364L1082 376" stroke="#cbd9e8" strokeWidth="1.500" fill="none" />
        <path
          d="M1074.500 341A21.500 21.500 0 0 0 1053 362.500C1053 374 1066 383 1074.500 398C1083 383 1096 374 1096 362.500A21.500 21.500 0 0 0 1074.500 341ZM1074.500 348A14.500 14.500 0 1 1 1074.500 377A14.500 14.500 0 0 1 1074.500 348Z"
          fill="#d24e24"
          fillRule="evenodd"
        />
      </svg>
    </div>
  );
}

function CalloutArrow() {
  return (
    <svg viewBox="730 230 290 215" className="absolute top-[230px] left-[730px] h-[215px] w-[290px]">
      <path
        d="M748.500 250C773 330 847 394 1004 381M956 329L1005 381L956 429"
        fill="none"
        stroke="#f2b246"
        strokeWidth="20.500"
        strokeLinecap="round"
        strokeLinejoin="round"
      />
    </svg>
  );
}

function Callout() {
  return (
    <div className="absolute -top-[10px] left-[227px] h-[245px] w-[746px] rounded-[22px] bg-black/75 pt-[27px] pl-[24px] text-[62px] leading-[62.700px] font-[450] whitespace-nowrap text-white [font-feature-settings:'cv11']">
      <p className="tracking-[1.15px]">Drop the pin at your</p>
      <p className="tracking-[0.7px]">pickup point and click</p>
      <p className="tracking-[0.9px]">
        on <span className="-ml-[5px] inline-block -skew-x-12">"</span>
        <span className="-ml-[3px]">Confirm</span>
        <span className="-ml-[2px] inline-block -skew-x-12">"</span> button
      </p>
    </div>
  );
}

function GuideBadge() {
  return (
    <div className="absolute top-[1090px] left-[51px] flex size-20 items-center justify-center rounded-full bg-[#848684] shadow-[0_2px_6px_rgba(0,0,0,0.4)]">
      <span className="-mt-[10px] ml-[3px] text-[42px] leading-none font-medium tracking-[-2px] text-[#6c1712]">
        g.
      </span>
      <span className="absolute right-[-16px] bottom-0 flex h-[29px] w-[39px] items-center justify-center rounded-full bg-[#080c15] text-[17.5px] font-bold text-[#8c8c90]">
        17
      </span>
    </div>
  );
}

export default function App() {
  return (
    <div className="relative h-[1210px] w-[2148px] overflow-hidden bg-[#3f3f3f] font-[Inter,sans-serif]">
      <Waves />
      <div className="relative flex h-full flex-col">
        <Header />
        <main className="flex justify-between pr-[295px] pl-[277px]">
          <LeftColumn />
          <FormCard />
        </main>
      </div>
      <div className="absolute top-0 h-[3px] w-full bg-[#353535]">
        <div className="h-[3px] w-full bg-linear-to-r from-[#7c4657] via-[#6d4668] to-[#54507a] [clip-path:inset(2px_0_0_0)]" />
      </div>
      <LocationModal />
      <Callout />
      <CalloutArrow />
      <PinHighlight />
      <GuideBadge />
    </div>
  );
}
